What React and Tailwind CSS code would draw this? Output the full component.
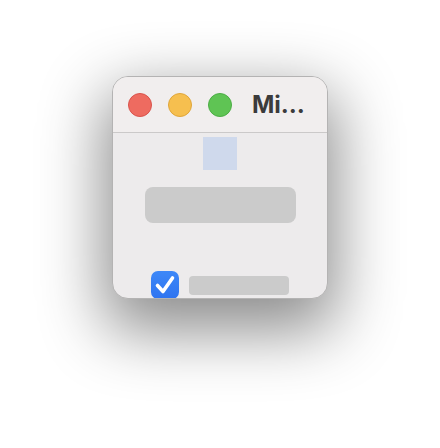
export default function App() {
  return (
    <div className="flex h-[448px] w-full justify-center bg-white pt-[76px]" style={{ fontFamily: 'Inter, "Liberation Sans", sans-serif' }}>
      <div className="flex h-[223px] w-[216px] flex-col overflow-hidden rounded-[16px] border border-[#b4b3b3] bg-[#edebec] shadow-[0_24px_64px_8px_rgba(0,0,0,0.45)]">
        {/* Title bar */}
        <div className="flex h-[56px] shrink-0 items-center gap-4 border-b border-[#cbc9c9] bg-[#f1eeee] pl-[15px]">
          <span className="h-6 w-6 shrink-0 rounded-full border border-[#d9534c] bg-[#ee6b60]" />
          <span className="h-6 w-6 shrink-0 rounded-full border border-[#e0a63a] bg-[#f6bf4f]" />
          <span className="h-6 w-6 shrink-0 rounded-full border border-[#4cad45] bg-[#5fc454]" />
          <span className="ml-1 whitespace-nowrap text-[24px] font-bold leading-none text-[#3b3b3b]">Mi…</span>
        </div>

        {/* Content */}
        <div className="flex flex-1 flex-col items-center pt-1">
          <div className="h-[33px] w-[34px] bg-[#cfd9ec]" />
          <div className="mt-[17px] h-[36px] w-[151px] rounded-lg bg-[#cbcbcb]" />
          <div className="mt-[48px] flex items-center gap-[10px]">
            <div className="flex h-[28px] w-[28px] items-center justify-center rounded-[7px] bg-gradient-to-b from-[#3d88f8] to-[#2f74f0]">
              <svg viewBox="0 0 28 28" className="h-[28px] w-[28px]" fill="none">
                <path d="M6.5 14.5 L12 20.5 L21.5 7" stroke="white" strokeWidth="3.6" strokeLinecap="round" strokeLinejoin="round" />
              </svg>
            </div>
            <div className="h-[19px] w-[100px] rounded-[4px] bg-[#cbcbcb]" />
          </div>
        </div>
      </div>
    </div>
  );
}
